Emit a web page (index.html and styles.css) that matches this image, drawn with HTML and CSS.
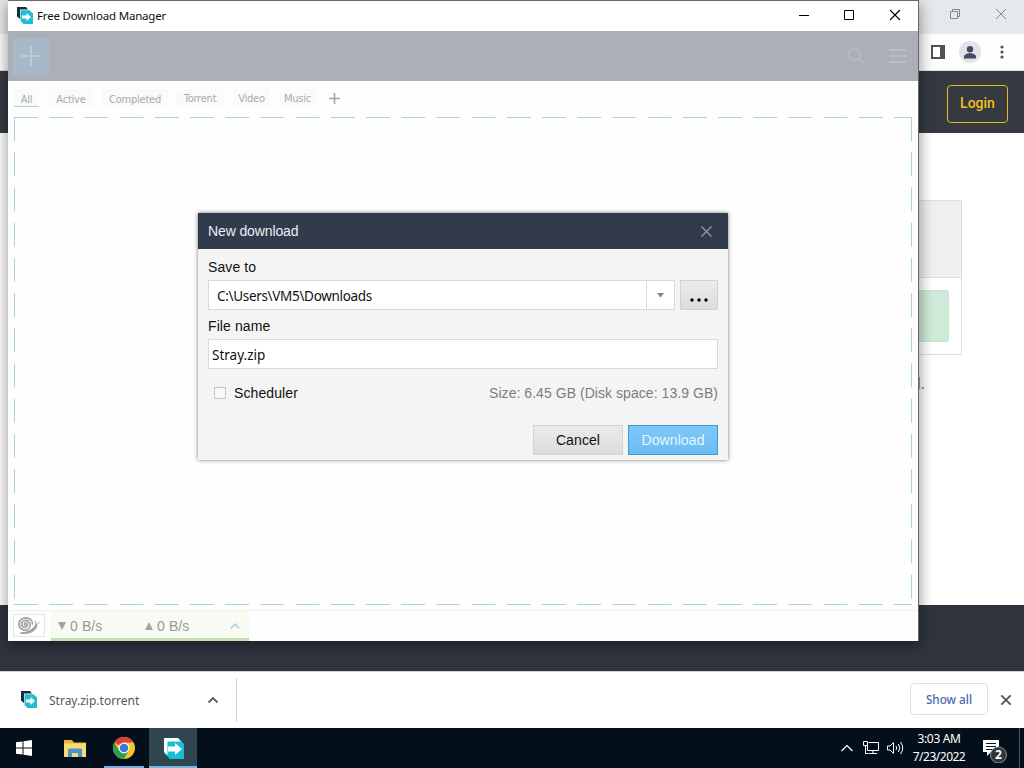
FILE: index.html
```html
<!DOCTYPE html>
<html lang="en">
<head>
<meta charset="utf-8">
<title>Free Download Manager</title>
<link rel="stylesheet" href="styles.css">
</head>
<body>
<svg width="0" height="0" class="defs">
  <symbol id="fdm" viewBox="0 0 16 17">
    <path d="M0 0H9L11 2.500H3V12L0 9.500Z" fill="#15303d"/>
    <path d="M3.500 3.200H12.500L16 6.500V17H6.500L3.500 14Z" fill="#22bdd3"/>
    <path d="M4.500 5.500H8.500M5 8.500H9.500V6L14 10L9.500 14V11.500H5Z" fill="#fff"/>
  </symbol>
</svg>
<div class="desktop">
  <div class="browser">
    <div class="tabstrip">
      <svg width="14" height="14" viewBox="0 0 14 14" fill="none" stroke="#85888b"><path d="M2.500 4.500h7v7h-7zM4.500 4V2.500h7v7H10"/></svg>
      <svg width="12" height="12" viewBox="0 0 12 12" fill="none" stroke="#85888b"><path d="M1 1l10 10M11 1L1 11"/></svg>
    </div>
    <div class="toolbar">
      <svg width="14" height="14" viewBox="0 0 14 14"><path d="M0 0h14v14H0z" fill="#4f5357"/><path d="M2 2h7v10H2z" fill="#fff"/></svg>
      <div class="avatar"><svg width="14" height="13" viewBox="0 0 14 13" fill="#424c60"><circle cx="7" cy="3.200" r="3.200"/><path d="M1 12.500V11c0-2.500 3-3.700 6-3.700s6 1.200 6 3.700v1.500z"/></svg></div>
      <svg width="4" height="14" viewBox="0 0 4 14" fill="#505458"><circle cx="2" cy="2" r="1.600"/><circle cx="2" cy="7" r="1.600"/><circle cx="2" cy="12" r="1.600"/></svg>
    </div>
    <div class="site-header"><div class="login">Login</div></div>
    <div class="site-page">
      <div class="panel"><div class="panel-head"></div><div class="panel-body"><div class="green"></div></div></div>
      <div class="note">l.</div>
    </div>
    <div class="site-footer"></div>
    <div class="shelf">
      <svg class="shelf-icon" width="16" height="17"><use href="#fdm"/></svg>
      <span class="shelf-name">Stray.zip.torrent</span>
      <svg class="shelf-up" width="12" height="8" viewBox="0 0 12 8" fill="none" stroke="#5a5d61" stroke-width="1.800"><path d="M1.500 6.500L6 2l4.500 4.500"/></svg>
      <div class="shelf-sep"></div>
      <div class="show-all">Show all</div>
      <svg class="shelf-x" width="12" height="12" viewBox="0 0 12 12" fill="none" stroke="#505357" stroke-width="1.800"><path d="M1.300 1.300l9.400 9.400M10.700 1.300l-9.400 9.400"/></svg>
    </div>
  </div>

  <div class="taskbar">
    <div class="task"><svg width="16" height="16" viewBox="0 0 16 16" fill="#fff"><path d="M0 2.300L6.500 1.400V7.500H0zM7.500 1.250L16 0v7.500H7.500zM0 8.500h6.500v6.100L0 13.700zM7.500 8.500H16V16l-8.500-1.250z"/></svg></div>
    <div class="task folder"><svg width="22" height="19" viewBox="0 0 22 19"><path d="M0 1h8l2 2.500h12V18H0z" fill="#e9b43d"/><path d="M0 4.500h22V18H0z" fill="#fbd978"/><path d="M4 18v-7q0-1.500 1.500-1.500h11q1.500 0 1.500 1.500v7h-4v-4H8v4z" fill="#4a94c9"/></svg></div>
    <div class="task running"><svg width="22" height="22" viewBox="0 0 22 22"><circle cx="11" cy="11" r="11" fill="#f5c62b"/><path d="M11 11L1.470 5.500A11 11 0 0 1 20.530 5.500H11z" fill="#dd4033"/><path d="M1.470 5.500A11 11 0 0 0 11 22L15.700 13.800 6.300 13.800z" fill="#2b9f50"/><circle cx="11" cy="11" r="5.400" fill="#fff"/><circle cx="11" cy="11" r="4.300" fill="#3d78dc"/></svg></div>
    <div class="task active"><svg width="20" height="21" viewBox="0 0 20 21"><path d="M0 0h14l6 6v15H6l-6-6z" fill="#18bfd4"/><path d="M0 0h14l3 3.500H3.500V17L0 14z" fill="#f5ffff"/><path d="M4 8.500h7V5l7 6-7 6v-3.500H4z" fill="#fff"/></svg></div>
    <div class="tray">
      <svg class="t-up" width="12" height="8" viewBox="0 0 12 8" fill="none" stroke="#fff" stroke-width="1.200"><path d="M.5 7L6 1.500 11.500 7"/></svg>
      <svg class="t-net" width="17" height="14" viewBox="0 0 17 14" fill="none" stroke="#fff"><path d="M5.500 1.500h10v8h-11V5M10 9.500v3M6 12.500h8M.5.500h4v4h-4zM2.500 4.500v8h3"/></svg>
      <svg class="t-vol" width="17" height="14" viewBox="0 0 17 14" fill="none" stroke="#fff"><path d="M.5 5H3l3.500-3.500v11L3 9H.5zM9 5q1.500 2 0 4M11.300 3q3 4 0 8M13.500 1q4.500 6 0 12"/></svg>
      <div class="clock"><span>3:03 AM</span><span class="date">7/23/2022</span></div>
      <div class="action"><svg width="24" height="24" viewBox="0 0 24 24"><path d="M0 1h16v12H8l-4 4v-4H0z" fill="#fff"/><path d="M3 4.500h10M3 7.500h10M3 10.500h6" stroke="#071522"/><circle cx="15.500" cy="16" r="8" fill="#30363d" stroke="#8a9096"/></svg><span class="badge">2</span></div>
      <div class="peek"></div>
    </div>
  </div>

  <div class="fdm">
    <div class="titlebar">
      <svg width="16" height="17"><use href="#fdm"/></svg>
      <span class="title">Free Download Manager</span>
      <div class="winbtns">
        <svg width="12" height="12" viewBox="0 0 12 12" stroke="#000"><path d="M1 6.500h10"/></svg>
        <svg width="12" height="12" viewBox="0 0 12 12" fill="none" stroke="#000"><path d="M1.500 1.500h9v9h-9z"/></svg>
        <svg width="12" height="12" viewBox="0 0 12 12" fill="none" stroke="#000" stroke-width="1.100"><path d="M1 1l10 10M11 1L1 11"/></svg>
      </div>
    </div>
    <div class="appbar">
      <div class="add"><svg width="20" height="20" viewBox="0 0 20 20" stroke="#bccbd6" stroke-width="2"><path d="M0 10h20M10 0v20"/></svg></div>
      <svg class="search" width="18" height="18" viewBox="0 0 18 18" fill="none" stroke="#b5b9c1" stroke-width="2"><circle cx="7.500" cy="7" r="6"/><path d="M12 11.500l5 5"/></svg>
      <svg class="menu" width="18" height="14" viewBox="0 0 18 14" stroke="#b8bec6" stroke-width="1.800"><path d="M0 1h18M0 7h18M0 13h18"/></svg>
    </div>
    <div class="tabs">
      <span class="tab sel">All</span><span class="tab t2">Active</span><span class="tab t3">Completed</span><span class="tab t4">Torrent</span><span class="tab t5">Video</span><span class="tab t6">Music</span>
      <svg width="11" height="11" viewBox="0 0 11 11" stroke="#a5a5a5" stroke-width="1.600"><path d="M0 5.500h11M5.500 0v11"/></svg>
    </div>
    <div class="drop">
      <svg width="898" height="488" viewBox="0 0 898 488" fill="none" stroke="#a8d3d9" stroke-dasharray="24 11.200"><path d="M0 .5h898"/><path d="M0 487.500h898"/><path d="M.5 0v488"/><path d="M897.500 0v488"/></svg>
    </div>
    <div class="status">
      <div class="snail"><svg width="22" height="17" viewBox="0 0 22 17" fill="none" stroke="#a2a2a6" stroke-width="1.700" stroke-linecap="round"><path d="M7.500 8C6 8.300 5.700 6.200 7.300 5.800C9.500 5.400 10.300 8.600 8 9.900C5.500 11.200 3.200 9 3.500 6.500C4 3.400 8 2.400 10.400 4.300C13.200 6.600 12.300 11 9.500 12.500C6 14.200 1 12 .9 7C.8 3 4.500.8 8 .9C12 1 14.500 3.600 14.500 7"/><path d="M2 16.200Q8 15.500 12 13.500T18.300 7.500Q19.500 9.500 17 12T11.500 15.700Q7 16.600 2 16.200Z" fill="#a2a2a6" stroke-width="1.200"/><path d="M18 8l-.8-4M18.500 8L21.500 5" stroke-width=".9"/></svg></div>
      <div class="speed"><svg class="tri" width="8" height="8" viewBox="0 0 8 8" fill="#a3a3a3"><path d="M0 0h8L4 8z"/></svg><span class="down">0 B/s</span><svg class="tri" width="8" height="8" viewBox="0 0 8 8" fill="#a3a3a3"><path d="M0 8h8L4 0z"/></svg><span>0 B/s</span><svg class="chev" width="10" height="6" viewBox="0 0 10 6" fill="none" stroke="#b5d5e2" stroke-width="1.800"><path d="M.7 5.300L5 1.200l4.300 4.100"/></svg></div>
    </div>

    <div class="dialog">
      <div class="dlg-head"><span>New download</span><svg width="11" height="11" viewBox="0 0 11 11" stroke="#939aa7" stroke-width="1.300"><path d="M.5.500l10 10M10.500.500l-10 10"/></svg></div>
      <div class="dlg-body">
        <div class="label">Save to</div>
        <div class="row"><div class="combo"><span class="path">C:\Users\VM5\Downloads</span><div class="arrow"><svg width="7" height="5" viewBox="0 0 7 5" fill="#858585"><path d="M0 0h7L3.500 4.500z"/></svg></div></div><div class="btn browse"><svg width="18" height="4" viewBox="0 0 18 4"><circle cx="2" cy="2" r="1.700"/><circle cx="9" cy="2" r="1.700"/><circle cx="16" cy="2" r="1.700"/></svg></div></div>
        <div class="label second">File name</div>
        <div class="input">Stray.zip</div>
        <div class="options"><span class="check"></span><span class="sched">Scheduler</span><span class="size">Size: 6.45 GB (Disk space: 13.9 GB)</span></div>
        <div class="actions"><div class="btn">Cancel</div><div class="btn primary">Download</div></div>
      </div>
    </div>
  </div>
</div>
</body>
</html>
```
FILE: styles.css
```css
* { box-sizing: border-box; }
body { margin: 0; font-family: "Liberation Sans", Arial, sans-serif; }
svg { display: block; flex: none; }
.defs { position: absolute; }
.desktop { position: relative; width: 1024px; height: 768px; overflow: hidden; background: #fff; }
span { white-space: nowrap; }

.browser { display: flex; flex-direction: column; height: 728px; }
.tabstrip { height: 34px; background: #e6e9ec; display: flex; justify-content: flex-end; align-items: center; gap: 33px; padding: 0 17px 6px 0; }
.toolbar { height: 37px; background: #fdfdfe; border-bottom: 1px solid #dfe1e3; display: flex; justify-content: flex-end; align-items: center; padding-right: 20px; }
.avatar { width: 22px; height: 22px; border-radius: 50%; background: #e0e4ea; margin: 0 19px 0 14px; display: flex; align-items: center; justify-content: center; }
.site-header { height: 62px; background: #343a40; display: flex; justify-content: flex-end; padding: 14px 16px 0 0; }
.login { width: 61px; height: 38px; border: 1px solid #e5bb25; border-radius: 4px; color: #f2bf1c; font: 500 14px/35px Roboto, sans-serif; text-align: center; }
.site-page { height: 472px; padding-top: 67px; }
.panel { width: 162px; height: 155px; margin-left: 800px; border: 1px solid #dfdfdf; }
.panel-head { height: 77px; background: #f0f0f0; border-bottom: 1px solid #dcdcdc; }
.panel-body { padding: 12px 12px 0 0; }
.green { height: 52px; border-radius: 3px; background: #d0ead9; border: 1px solid #c3e2cf; }
.note { margin: 20px 0 0 917px; font-size: 16px; line-height: 18px; color: #666; }
.site-footer { height: 66px; background: #2f343f; }
.shelf { height: 57px; background: #fff; border-top: 1px solid #cfd2d6; display: flex; align-items: center; padding: 0 12px 0 21px; }
.shelf-name { font: 12px/18px "Noto Sans", sans-serif; color: #55585c; width: 91px; margin: 1px 0 0 12px; }
.shelf-icon { margin-bottom: 2px; }
.shelf-up { margin-left: 67px; }
.shelf-sep { width: 1px; height: 44px; background: #cfcfcf; margin-left: 17px; }
.show-all { width: 78px; height: 32px; margin: 0 12px 2px auto; border: 1px solid #dcdfe3; border-radius: 4px; color: #4669ac; text-align: center; font: 500 11.700px/30px "Noto Sans", sans-serif; }

.taskbar { height: 40px; background: #03101b; display: flex; position: relative; }
.task { width: 48px; height: 40px; display: flex; align-items: center; justify-content: center; margin-right: 2px; }
.task.folder { padding-left: 2px; }
.task.running { width: 40px; margin: 0 5px 0 4px; border-bottom: 2px solid #76b0df; padding-top: 2px; }
.task.active { background: #304650; border-bottom: 2px solid #76b9e6; padding: 2px 0 0 2px; }
.tray { display: flex; margin-left: auto; align-items: center; color: #fff; }
.t-net { margin-left: 10px; }
.t-vol { margin-left: 7px; }
.clock { width: 68px; margin-left: 1px; display: flex; flex-direction: column; align-items: center; font: 12px/18px "Noto Sans", sans-serif; letter-spacing: -.35px; }
.date { letter-spacing: -.5px; }
.action { width: 24px; height: 24px; position: relative; margin: 5px 12px 0 10px; }
.badge { position: absolute; left: 8px; top: 8px; width: 15px; text-align: center; font: bold 12px/16px "Noto Sans", sans-serif; }
.peek { width: 5px; height: 40px; border-left: 1px solid #4c5762; }

.fdm { position: absolute; left: 8px; top: 0; width: 911px; height: 641px; background: #fefefe; border-top: 1px solid #686868; border-right: 1px solid #666; display: flex; flex-direction: column; box-shadow: 0 4px 14px rgba(0,0,0,.45); }
.fdm > div { flex: none; }
.titlebar { height: 30px; background: #fff; display: flex; align-items: center; padding: 0 17px 2px 9px; }
.title { font: 11.500px/18px "Noto Sans", sans-serif; letter-spacing: -.18px; margin: 1px 0 0 4px; color: #111; }
.winbtns { margin-left: auto; display: flex; gap: 33px; }
.winbtns svg:last-child { margin-left: 1px; }
.appbar { height: 50px; background: #abafb7; display: flex; align-items: center; padding: 0 11px 0 5px; }
.add { width: 36px; height: 37px; background: #a5b9c8; display: flex; align-items: center; justify-content: center; }
.search { margin-left: auto; }
.menu { margin: 0 0 0 24px; }
.tabs { height: 36px; display: flex; align-items: flex-start; padding: 8px 0 0 6px; font: 11px/22px "DejaVu Sans Condensed", "DejaVu Sans", sans-serif; font-stretch: condensed; color: #aaa; }
.tab { height: 18px; background: #fafafa; text-align: center; letter-spacing: -.22px; }
.sel { width: 25px; border-bottom: 1px solid #a9d3e3; }
.t2 { width: 44px; margin-left: 10px; }
.t3 { width: 66px; margin-left: 9px; }
.t4 { width: 48px; margin-left: 8px; line-height: 20px; }
.t5 { width: 37px; margin-left: 9px; line-height: 20px; }
.t6 { width: 37px; margin-left: 9px; line-height: 20px; }
.tabs svg { margin: 4px 0 0 13px; }
.drop { height: 488px; margin: 0 0 0 6px; }
.status { height: 31px; margin-top: 5px; border-top: 1px solid #f1f1f1; display: flex; padding-left: 5px; }
.snail { width: 32px; height: 23px; border: 1px solid #e3e4eb; margin: 3px 6px 0 0; display: flex; align-items: center; justify-content: center; }
.speed { width: 198px; height: 30px; background: #f7fbf2; border-bottom: 3px solid #c4dfb0; color: #999; font-size: 14px; display: flex; align-items: center; padding: 2px 9px 0 7px; }
.speed span { margin-left: 4px; letter-spacing: .1px; }
.speed .down { width: 75px; }
.chev { margin-left: auto; }

.dialog { position: absolute; left: 190px; top: 212px; width: 530px; height: 247px; background: #f4f4f4; box-shadow: 0 0 4px rgba(0,0,0,.55); font-size: 14px; color: #111; }
.dlg-head { height: 36px; background: #323b4c; color: #e9edf3; display: flex; align-items: center; justify-content: space-between; padding: 0 16px 0 10px; letter-spacing: -.12px; }
.dlg-body { padding: 10px; }
.label { height: 21px; line-height: 17px; letter-spacing: .1px; }
.second { margin-top: 8px; }
.row { display: flex; gap: 5px; height: 30px; }
.combo { flex: 1; border: 1px solid #d9d9d9; background: #fff; display: flex; align-items: center; justify-content: space-between; }
.path { padding: 2px 0 0 8px; font: 13.500px/18px "Noto Sans", sans-serif; letter-spacing: -.32px; }
.arrow { width: 28px; height: 28px; border-left: 1px solid #d9d9d9; display: flex; align-items: center; justify-content: center; }
.btn { width: 90px; height: 30px; line-height: 28px; border: 1px solid #d2d2d2; background: linear-gradient(#ebebeb, #dcdcdc); text-align: center; letter-spacing: .1px; }
.browse { width: 38px; display: flex; align-items: flex-end; justify-content: center; padding-bottom: 7px; }
.input { height: 30px; border: 1px solid #d9d9d9; background: #fff; font: 13.500px/30px "Noto Sans", sans-serif; padding-left: 3px; }
.options { height: 16px; margin-top: 16px; display: flex; align-items: center; }
.check { width: 12px; height: 12px; border: 1px solid #c4c4c4; background: #f8f8f8; margin: 0 8px 0 6px; }
.sched { letter-spacing: .1px; }
.size { margin-left: auto; color: #7d7d7d; letter-spacing: .05px; }
.actions { display: flex; justify-content: flex-end; gap: 5px; margin-top: 24px; }
.primary { background: linear-gradient(#7fc8f8, #6bbcf1); border-color: #3e98d6; color: #e6f5ff; }
```
